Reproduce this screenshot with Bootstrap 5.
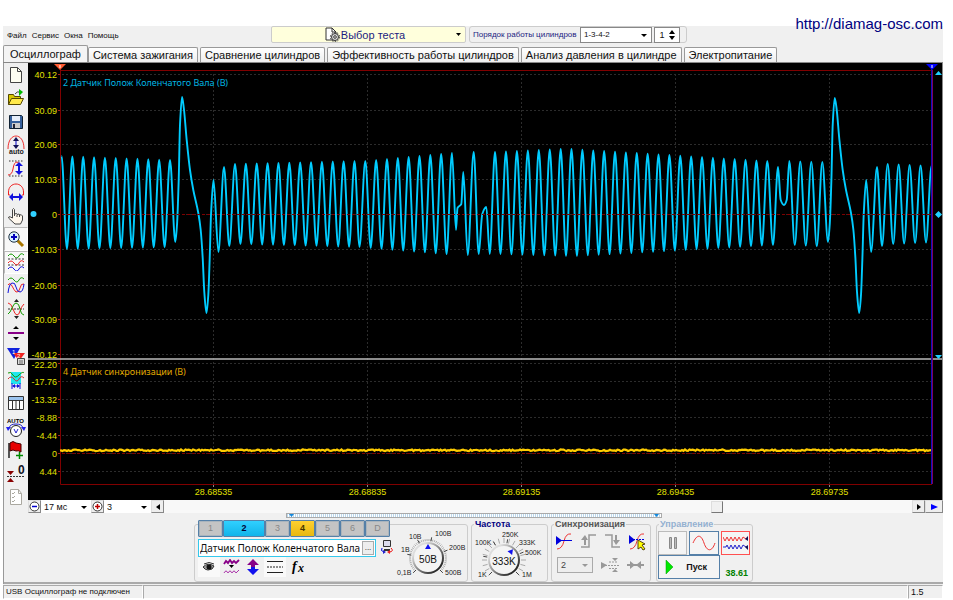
<!DOCTYPE html>
<html lang="ru">
<head>
<meta charset="utf-8">
<meta name="viewport" content="width=device-width, initial-scale=1">
<title>USB Осциллограф</title>
<link href="https://cdn.jsdelivr.net/npm/bootstrap@5.3.0/dist/css/bootstrap.min.css" rel="stylesheet">
<style>
:root{--face:#f0f0f0;--cy:#00ccff;--navy:#000080}
body{background:#fff;font:8px/12px "Liberation Sans",Arial,sans-serif;color:#111;padding:26px 10px 0 3px}
button,input,select{font:inherit;color:inherit;margin:0;padding:0;border-radius:0}
svg{display:block}
svg text{font-family:"Liberation Sans",Arial,sans-serif}
svg .trace-name{font-family:"Noto Sans","Liberation Sans",sans-serif}
.site-url{position:absolute;top:14px;right:10px;font-size:15px;line-height:20px;color:var(--navy)}
.app-win{background:var(--face)}
.top-bar{height:20px}
.main-menu{width:268px;padding:0 4px;gap:5px}
.main-menu a{color:#111}
.test-btn{width:195px;height:17px;background:#ffffdc;border:1px solid #ccc;border-radius:2px;color:#1c1c80;font-size:11px;line-height:14px}
.order-box{border:1px solid #ccc;border-radius:3px;height:17px;margin-left:3px;padding:0 6px 0 3px;gap:2px;font-size:8px;color:#1c1c80;width:218px}
.flat-select{appearance:none;border:0;background:#fff;outline:0;color:#111;padding:0 3px}
.pick{position:relative;background:#fff}
.pick::after{content:"";position:absolute;right:4px;top:50%;margin-top:-1px;border:3px solid transparent;border-top-color:#000;border-bottom:0;pointer-events:none}
.order-pick{border:1px solid #888;width:72px;height:16px;font-size:8px}
.order-pick select,.tb-pick select,.sync-pick select{width:100%;height:100%;display:block}
.spin{border:1px solid #888;width:26px;height:16px;background:#fff}
.spin input{width:14px;border:0;text-align:center;font-size:9px;color:#111;appearance:textfield;background:none}
.spin button{border:0;background:none;width:8px;height:6px;display:block}
.scope-tabs{height:17px;gap:2px;border-bottom:1px solid #888}
.scope-tabs button{border:1px solid #999;border-bottom:0;border-radius:2px 2px 0 0;background:linear-gradient(#fff,#eee);font-size:11px;line-height:14px;height:15px;white-space:nowrap;flex:none;padding:0 4px}
.scope-tabs .sel{background:#f4f4f4;height:17px;margin-right:-2px;padding:0 6px}
.tools{width:25px;border-left:1px solid #999;padding-bottom:4px}
.tools button{flex:1 1 0;min-height:0;border:1px solid transparent;background:none;display:flex;align-items:center;justify-content:center}
.tools .down{background:#f8f8f8;border-color:#bbb #fff #fff #bbb}
.scope-view{background:#000;width:100%;height:auto}
.time-bar{height:13px;background:#fff;font-size:9px}
.tb-pick{height:13px}
.tb-time{width:50px}
.tb-mult{width:47px}
.sq{width:13px;height:13px;background:#eee;border:1px solid #999;border-color:#ddd #888 #888 #ddd;display:flex;align-items:center;justify-content:center;flex:none}
.sq-end{width:18px}
.pos-range{appearance:none;background:#f8f8f8;height:13px;min-width:0}
.pos-range::-webkit-slider-thumb{appearance:none;width:12px;height:12px;background:var(--face);border:1px solid;border-color:#ddd #777 #777 #ddd}
.splitter{width:376px;height:5px;border:1px solid #aaa;background:repeating-linear-gradient(90deg,#bcd8ec 0 1px,#fff 1px 2px);padding:0 2px}
.ctl-wrap{border-left:1px solid #999}
.ctl-row{gap:3px;height:66px;padding-top:3px;border-bottom:2px solid #aaa}
.grp{border:1px solid #ccc;border-radius:3px;position:relative;height:58px;margin-top:3px;min-width:0}
.grp h2{position:absolute;top:-6px;left:2px;margin:0;padding:0 1px;background:var(--face);font-size:9px;line-height:10px;font-weight:700}
.ttl-freq{color:#000080}.ttl-sync{color:#555}.ttl-run{color:#94b0d0}
.ch-grp{width:274px}
.ch-left{width:198px;padding-left:3px;margin-top:-5px}
.ch-btns button{border:1px solid #5580a8;background:#c4c4c4;color:#888;font-size:9px;line-height:13px;height:17px;width:25px;border-radius:1px;box-shadow:inset 0 0 0 1px #aab4bc}
.ch-btns .ch-cy{background:linear-gradient(#30d0ff,#10b4ea);width:42px;color:#003;font-weight:700;box-shadow:none}
.ch-btns .ch-ye{background:linear-gradient(#ffd030,#e8b810);color:#430;font-weight:700;box-shadow:none}
.name-box{width:178px;height:18px;border:1px solid #35c8ec;background:#fff;margin:2px 0 0 0;padding:1px}
.name-box input{border:0;flex:1;min-width:0;font-family:"Noto Sans","Liberation Sans",sans-serif;font-size:10px;outline:0;color:#111}
.name-box button{width:12px;border:1px solid #aaa;background:#eee;line-height:6px}
.ch-icons button{width:22px;height:20px;border:0;background:none;display:flex;align-items:center;justify-content:center}
.ch-icons .down{background:#f9f9f9}
.serif-it{font-style:italic;font-weight:700}
svg .serif-it{font-family:"Liberation Serif",serif}
.fr-grp{width:77px}
.sy-grp{width:100px}
.cn-grp{width:97px;margin-left:2px}
.sync-icons{padding:8px 3px 0 4px;height:28px}
.sync-icons button{border:0;background:none;display:flex;align-items:flex-start}
.sync-pick{width:36px;height:16px;border:1px solid #aaa;background:#eee;font-size:9px}
.sync-pick select{background:#eee;color:#444}
.sync-pick::after{border-top-color:#999}
.sync-low{padding:4px 3px 0 5px;gap:8px}
.run-top{gap:2px;padding:6px 2px 0 1px}
.run-top button{width:30px;height:24px;border:1px solid #5580a8;background:#f4f4f4;display:flex;align-items:center;justify-content:center}
.run-top .off{border-color:#bbb}
.run-top .rec{border-color:#ff5050}
.start-btn{width:62px;height:24px;border:1px solid #5580a8;background:#f4f4f4;margin-left:1px;font-size:9px;font-weight:700;padding:0 12px 0 6px}
.rate{color:#008000;font-weight:700;font-size:9px}
.status{height:14px;margin-top:1px;background:var(--face)}
.status div{border:1px solid;border-color:#aaa #fff #fff #aaa;line-height:12px;padding-left:2px}
.st-a{width:140px}.st-c{width:35px;font-size:9px}
</style>
<script src="https://cdn.jsdelivr.net/npm/bootstrap@5.3.0/dist/js/bootstrap.bundle.min.js"></script>
</head>
<body>
<a class="site-url text-decoration-none" href="http://diamag-osc.com">http://diamag-osc.com</a>
<div class="app-win">
<header class="top-bar d-flex align-items-start">
  <nav class="main-menu d-flex align-self-center">
    <a class="text-decoration-none" href="#">Файл</a><a class="text-decoration-none" href="#">Сервис</a><a class="text-decoration-none" href="#">Окна</a><a class="text-decoration-none" href="#">Помощь</a>
  </nav>
  <button class="test-btn d-flex align-items-center justify-content-center position-relative" type="button">
    <svg width="17" height="15" viewBox="0 0 17 15"><path d="M2 1h6l4 4v8H2z" fill="#fff" stroke="#333"/><path d="M8 1v4h4" fill="none" stroke="#333"/><circle cx="11" cy="10" r="3.5" fill="#ddd" stroke="#333"/><circle cx="11" cy="10" r="4.6" fill="none" stroke="#333" stroke-dasharray="1.5 1.4"/><circle cx="11" cy="10" r="1.3" fill="#fff" stroke="#333"/></svg>
    <span class="pe-2">Выбор теста</span>
    <svg class="position-absolute end-0 me-1" width="5" height="3"><path d="M0 0h5L2.500 3z"/></svg>
  </button>
  <div class="order-box d-flex align-items-center">
    <label class="flex-grow-1 text-nowrap" for="ord">Порядок работы цилиндров</label>
    <div class="pick order-pick flex-shrink-0"><select id="ord" class="flat-select"><option>1-3-4-2</option></select></div>
    <div class="spin d-flex align-items-center flex-shrink-0"><input aria-label="Номер цилиндра" type="text" value="1">
      <div><button type="button" aria-label="Больше"><svg width="6" height="4"><path d="M0 4h6L3 0z"/></svg></button><button type="button" aria-label="Меньше"><svg width="6" height="5"><path d="M0 1h6L3 5z"/></svg></button></div></div>
  </div>
</header>
<div class="scope-tabs d-flex align-items-end" role="tablist">
  <button role="tab" class="sel" type="button">Осциллограф</button>
  <button role="tab" type="button">Система зажигания</button>
  <button role="tab" type="button">Сравнение цилиндров</button>
  <button role="tab" type="button">Эффективность работы цилиндров</button>
  <button role="tab" type="button">Анализ давления в цилиндре</button>
  <button role="tab" type="button">Электропитание</button>
</div>
<main class="d-flex">
<div class="tools d-flex flex-column flex-shrink-0">
  <button type="button" aria-label="Новый"><svg width="18" height="18" viewBox="0 0 18 18"><path d="M3.500 1.500h7l4 4v11h-11z" fill="#fffff2" stroke="#444"/><path d="M10.500 1.500v4h4" fill="none" stroke="#444"/></svg></button>
  <button type="button" aria-label="Открыть"><svg width="18" height="18" viewBox="0 0 18 18"><path d="M1.500 15.500v-10h5l1 2h6v3" fill="#d8c800" stroke="#554800"/><path d="M1.500 15.500l3-6h12l-3 6z" fill="#ffe94a" stroke="#554800"/><path d="M8 5q2-3 5-2" fill="none" stroke="#444"/><path d="M12 0l4 3-4 4z" fill="#0b0"/></svg></button>
  <button type="button" aria-label="Сохранить"><svg width="18" height="18" viewBox="0 0 18 18"><path d="M2.500 2.500h12l1 1v12h-13z" fill="#36609c" stroke="#123"/><path d="M5 3h8v5H5z" fill="#e6eefa"/><path d="M5 10h8v5H5z" fill="#ccc"/><path d="M6 11h2v4H6z" fill="#223"/></svg></button>
  <button type="button" aria-label="Авто"><svg width="18" height="20" viewBox="0 0 18 20"><path d="M1 14C1 5 5 1 9 1s8 4 8 13" fill="none" stroke="#e33"/><path d="M9 5v6" stroke="#00c"/><path d="M6 6l3-4 3 4zM6 10h6l-3 4z" fill="#115"/><text x="2" y="19" font-size="7" font-weight="bold" fill="#222">auto</text></svg></button>
  <button type="button" aria-label="Амплитуда"><svg width="18" height="18" viewBox="0 0 18 18"><path d="M2 1h15M2 16h15" stroke="#333" stroke-dasharray="1.500 1.500"/><path d="M1 15q4 0 5-6 1-7 4-7 2 0 2 3" fill="none" stroke="#e22"/><path d="M12 5v7" stroke="#11d" stroke-width="2"/><path d="M8 6l4-4 4 4zM8 11h8l-4 4z" fill="#11d"/></svg></button>
  <button type="button" aria-label="Период"><svg width="18" height="18" viewBox="0 0 18 18"><path d="M3 12H1.500V9C1.500 4 5 1 9 1s7.500 3 7.500 8v3H15" fill="none" stroke="#e22"/><path d="M5 14h8" stroke="#11d" stroke-width="2"/><path d="M6 10v8l-4-4zM12 10v8l4-4z" fill="#11d"/></svg></button>
  <button type="button" aria-label="Рука"><svg width="18" height="18" viewBox="0 0 18 18"><path d="M5.500 11V2.500q1-2 2 0V7l2-.5.500 1 2-.5.500 1q2-1 3 1v4l-2 4H8L1.500 11q0-2 2-1z" fill="#fff8ee" stroke="#444"/><path d="M7.500 7v2M10 8v2M12.500 8v2" stroke="#444"/></svg></button>
  <button type="button" class="down" aria-label="Масштаб"><svg width="18" height="18" viewBox="0 0 18 18"><path d="M10 10l6 6" stroke="#a70" stroke-width="3"/><circle cx="7" cy="7" r="5.200" fill="#d8f2ff" stroke="#234"/><path d="M4 7h6M7 4v6" stroke="#00b" stroke-width="2"/></svg></button>
  <button type="button" class="down" aria-label="Раздельно"><svg width="18" height="18" viewBox="0 0 18 18" fill="none"><path d="M1 3q3-4 6 0t5 0 5-1" stroke="#190"/><path d="M1 6h16M1 12h16" stroke="#333" stroke-dasharray="2 1.500"/><path d="M1 10q3-4 6 0t5 0 5-1" stroke="#e22"/><path d="M1 16q3-4 6 0t5 0 5-1" stroke="#11d"/></svg></button>
  <button type="button" aria-label="Наложение"><svg width="18" height="18" viewBox="0 0 18 18" fill="none"><path d="M1 3q3-4 6 0t5 0 5-1" stroke="#190"/><path d="M1 8q2-3 4 1t4 6q3 1 4-4t4-4" stroke="#e22"/><path d="M1 16q1-9 4-10t4 4 4 5 4-8" stroke="#11d"/></svg></button>
  <button type="button" aria-label="Совместить"><svg width="18" height="20" viewBox="0 0 18 20" fill="none"><path d="M1 10h16" stroke="#333" stroke-dasharray="2 1"/><path d="M1 4q3 0 5 6t4 6q2 0 3-4t4-7" stroke="#e22"/><path d="M1 15q2-1 4-6t4-5q3 0 4 6t4 6" stroke="#190"/><path d="M7 3h5L9.500 0zM7 17h5l-2.500 3z" fill="#222"/></svg></button>
  <button type="button" aria-label="Разделить"><svg width="18" height="18" viewBox="0 0 18 18"><path d="M6 5h6L9 2zM6 13h6l-3 3z"/><path d="M1 9h16" stroke="#808" stroke-width="2"/></svg></button>
  <button type="button" aria-label="Маркеры"><svg width="18" height="18" viewBox="0 0 18 18"><path d="M0 1h13L7 12z" fill="#12d"/><path d="M6 6h12l-6 8z" fill="#e22"/><text x="5" y="7" font-size="6" fill="#fff">1</text><text x="10" y="11" font-size="6" fill="#fff">2</text><path d="M10.500 11.500h7v6h-7z" fill="#ddd" stroke="#444"/><path d="M12 14h4M12 16h4" stroke="#666"/></svg></button>
  <button type="button" aria-label="Интервал"><svg width="18" height="18" viewBox="0 0 18 18" fill="none"><path d="M4 1h10v12H4z" fill="#1ee6ee"/><path d="M1 2q3-2 5 2t6 0 5-2" stroke="#190"/><path d="M1 8q3-4 6 0t5 0 5-1" stroke="#c33"/><path d="M5 12v6M13 12v6M6 15h6" stroke="#11d"/><path d="M5 15l3-2v4zM13 15l-3-2v4z" fill="#11d"/></svg></button>
  <button type="button" aria-label="Таблица"><svg width="18" height="18" viewBox="0 0 18 18"><path d="M1.500 2.500h15v13h-15z" fill="#fff" stroke="#333"/><path d="M2 3h14v3H2z" fill="#9cc4ee"/><path d="M2 6.500h14M5.500 6v9M9 6v9M12.500 6v9" stroke="#333"/></svg></button>
  <button type="button" aria-label="Авто вольт"><svg width="20" height="22" viewBox="0 0 20 22"><text x="1" y="7" font-size="6" font-weight="bold">AUTO</text><circle cx="10" cy="15" r="5.500" fill="#fff" stroke="#222"/><path d="M8 13l2 4 2-4" fill="none" stroke="#22c"/><path d="M3 12q1-4 7-4t7 4" fill="none" stroke="#22c"/><path d="M0 11h5l-3 4zM15 11h5l-2 4z" fill="#22e"/></svg></button>
  <button type="button" aria-label="Флаг"><svg width="18" height="18" viewBox="0 0 18 18"><path d="M2 2v15" stroke="#222" stroke-width="1.500"/><path d="M3 2q3-3 6 0l5 1v8q-3-2-5-1-3-2-6 0z" fill="#e60000" stroke="#400"/><path d="M9 14.500h7M12.500 11v7" stroke="#080" stroke-width="1.500"/></svg></button>
  <button type="button" aria-label="Ноль"><svg width="20" height="20" viewBox="0 0 20 20"><text x="12" y="10" font-size="12" font-weight="bold" fill="#112">0</text><path d="M1 7h7l-3.500 4zM1 18h7l-3.500-4z" fill="#800"/><path d="M1 12.500h17" stroke="#333" stroke-dasharray="2 1"/></svg></button>
  <button type="button" aria-label="Отчёт"><svg width="18" height="18" viewBox="0 0 18 18"><path d="M3.500 1.500h8l3 4v11h-11z" fill="#fff" stroke="#aaa8a0"/><path d="M11.500 1.500v4h3M5 5l1 1 2-2M5 9l1 1 2-2M5 13l1 1 2-2" fill="none" stroke="#aaa8a0"/></svg></button>
</div>
<div class="flex-grow-1">
<svg class="scope-view" id="scope" viewBox="28 63 915 437"></svg>
<div class="time-bar d-flex">
  <button class="sq" type="button" aria-label="Сжать"><svg width="11" height="11" viewBox="0 0 11 11"><circle cx="5.500" cy="5.500" r="4.500" fill="#fff" stroke="#333"/><path d="M3 5.500h5" stroke="#00c" stroke-width="1.500"/></svg></button>
  <div class="pick tb-pick tb-time"><select class="flat-select" aria-label="Развёртка"><option>17 мс</option></select></div>
  <button class="sq" type="button" aria-label="Растянуть"><svg width="11" height="11" viewBox="0 0 11 11"><circle cx="5.500" cy="5.500" r="4.500" fill="#fff" stroke="#333"/><path d="M3 5.500h5M5.500 3v5" stroke="#b00" stroke-width="1.500"/></svg></button>
  <div class="pick tb-pick tb-mult"><select class="flat-select" aria-label="Множитель"><option>3</option></select></div>
  <button class="sq" type="button" aria-label="Влево"><svg width="4" height="6"><path d="M4 0v6L0 3z"/></svg></button>
  <input class="pos-range flex-grow-1" type="range" min="0" max="1000" value="743" aria-label="Позиция">
  <button class="sq" type="button" aria-label="Вправо"><svg width="4" height="6"><path d="M0 0v6l4-3z"/></svg></button>
  <button class="sq sq-end" type="button" aria-label="В конец"><svg width="7" height="6"><path d="M0 0v6l7-3z" fill="#00f"/></svg></button>
</div>
</div>
</main>
<div class="ctl-wrap">
<div class="d-flex justify-content-center"><button class="splitter d-flex justify-content-between" type="button" aria-label="Свернуть панель"><svg width="5" height="3"><path d="M0 0h5L2.500 3z" fill="#18d"/></svg><svg width="5" height="3"><path d="M0 0h5L2.500 3z" fill="#18d"/></svg></button></div>
<section class="ctl-row d-flex justify-content-center">
  <div class="grp ch-grp d-flex">
    <div class="ch-left">
      <div class="ch-btns d-flex"><button type="button">1</button><button type="button" class="ch-cy">2</button><button type="button">3</button><button type="button" class="ch-ye">4</button><button type="button">5</button><button type="button">6</button><button type="button">D</button></div>
      <div class="d-flex align-items-center"><div class="name-box d-flex"><input type="text" aria-label="Название канала" value="Датчик Полож Коленчатого Вала"><button type="button" aria-label="Выбрать">...</button></div>
      <svg class="ms-1" width="13" height="14" viewBox="0 0 13 14"><path d="M3.500.5h7v6h-7z" fill="#dde" stroke="#333"/><path d="M4 9h6v2H4z" fill="#333"/><path d="M2 8q-2 3 2 4" fill="none" stroke="#00d"/><path d="M11 8q3 3-1 4" fill="none" stroke="#e00"/><path d="M3 10l3 2-3 2z" fill="#22c"/><path d="M10 10l-3 2 3 2z" fill="#e22"/></svg></div>
      <div class="ch-icons d-flex">
        <button type="button" class="down" aria-label="Показать"><svg width="14" height="10" viewBox="0 0 14 10"><path d="M1 5q5-5 11-1-1 4-6 4Q3 8 1 5z" fill="#999" stroke="#333"/><circle cx="7" cy="5" r="2.500" fill="#111"/><path d="M2 2q5-3 10 0" fill="none" stroke="#333"/></svg></button>
        <button type="button" aria-label="Фильтр"><svg width="17" height="16" viewBox="0 0 17 16"><path d="M1 5l2-3 2 2 2-3 2 3 2-2 2 2 3-3" fill="none" stroke="#808" stroke-width="1.800"/><path d="M1 14q2-4 4 0 2-4 4 0 2-4 4 0l3-3" fill="none" stroke="#a3a"/><path d="M6 6h5L8.500 9z"/></svg></button>
        <button type="button" aria-label="Инверсия"><svg width="14" height="18" viewBox="0 0 14 18"><path d="M7 1l6 6h-4v2H5V7H1z" fill="#808"/><path d="M7 17l6-6h-4V9H5v2H1z" fill="#11e"/></svg></button>
        <button type="button" class="down" aria-label="Уровни"><svg width="16" height="14"><path d="M0 1.500h16M0 12.500h16" stroke="#222"/><path d="M0 7h16" stroke="#222" stroke-dasharray="2 1"/></svg></button>
        <button type="button" aria-label="Функция"><svg width="16" height="16" viewBox="0 0 16 16"><text class="serif-it" x="3" y="12" font-size="14">f</text><text class="serif-it" x="9" y="13" font-size="12">x</text></svg></button>
      </div>
    </div>
    <svg id="volt" width="74" height="56" viewBox="391 525 74 56"></svg>
  </div>
  <div class="grp fr-grp"><h2 class="ttl-freq">Частота</h2><svg id="freq" width="74" height="56" viewBox="471 525 74 56"></svg></div>
  <div class="grp sy-grp"><h2 class="ttl-sync">Синхронизация</h2>
    <div class="sync-icons d-flex justify-content-between">
      <button type="button" aria-label="Нарастание"><svg width="16" height="17" viewBox="0 0 16 17"><path d="M1 16q5 0 7-8t7-7" fill="none" stroke="#e33"/><path d="M1 7.500h15" stroke="#00d"/><path d="M0 3l6 4.500L0 12z" fill="#00d"/></svg></button>
      <button type="button" aria-label="Фронт"><svg width="17" height="16" viewBox="0 0 17 16"><path d="M1 14h8V2h7" fill="none" stroke="#999" stroke-width="1.500"/><path d="M5 12V6" stroke="#999" stroke-width="2"/><path d="M1 7l4-5 3 5z" fill="#999"/></svg></button>
      <button type="button" aria-label="Спад"><svg width="17" height="16" viewBox="0 0 17 16"><path d="M1 2h7v12h8" fill="none" stroke="#999" stroke-width="1.500"/><path d="M12 2v6" stroke="#999" stroke-width="2"/><path d="M9 7h7l-4 5z" fill="#999"/></svg></button>
      <button type="button" aria-label="Уровень"><svg width="18" height="18" viewBox="0 0 18 18"><path d="M1 16q5 0 7-8t7-7" fill="none" stroke="#e33"/><path d="M1 6.500h15" stroke="#00d" stroke-dasharray="2 1"/><path d="M0 2l6 5-6 4z" fill="#00d"/><path d="M9 7l7 4-3 1 3 4-2 1-2-3-3 2z" fill="#ff0" stroke="#541"/></svg></button>
    </div>
    <div class="sync-low d-flex align-items-center"><div class="pick sync-pick"><select class="flat-select" aria-label="Канал синхронизации"><option>2</option></select></div>
      <svg width="18" height="16" viewBox="0 0 18 16" fill="#999"><path d="M0 5l6 3-6 4zM11 1h6l-3 3zM11 15h6l-3-3z"/><path d="M4 8.500h14M8 5h9M8 11.500h9" stroke="#999" stroke-dasharray="2 1"/></svg>
      <svg width="17" height="10" viewBox="0 0 17 10"><path d="M0 5h17" stroke="#999" stroke-width="2"/><path d="M3 1l5 4-5 4zM14 1L9 5l5 4z" fill="#999"/></svg></div>
  </div>
  <div class="grp cn-grp"><h2 class="ttl-run">Управление</h2>
    <div class="run-top d-flex">
      <button type="button" class="off" aria-label="Пауза"><svg width="10" height="12"><path d="M1.500.5h2v11h-2zM6.500.5h2v11h-2z" fill="#bbb" stroke="#888"/></svg></button>
      <button type="button" aria-label="Однократно"><svg width="24" height="16" viewBox="0 0 24 16"><path d="M1 8C5-1 9-1 12 8s8 9 11 0" fill="none" stroke="#e33"/></svg></button>
      <button type="button" class="rec" aria-label="Запись"><svg width="25" height="16" viewBox="0 0 25 16" fill="none"><path d="M0 2l2 4 2-4 2 4 2-4 2 4 2-4 2 4 2-4 2 4 2-4 3 2" stroke="#e33"/><path d="M0 12h3l1-2 2 4 2-4 2 4 2-4 2 4 2-4 2 4 2-4 3 2" stroke="#22c"/><path d="M25 1v5l-3-2zM25 10v5l-3-3z" fill="#115"/></svg></button>
    </div>
    <div class="d-flex align-items-end justify-content-between pe-1"><button type="button" class="start-btn d-flex align-items-center justify-content-between"><svg width="9" height="14"><path d="M1 0v14l7-7z" fill="#00e800" stroke="#090" stroke-width=".5"/></svg>Пуск</button><span class="rate">38.61</span></div>
  </div>
</section>
</div>
<footer class="status d-flex"><div class="st-a">USB Осциллограф не подключен</div><div class="flex-grow-1"></div><div class="st-c">1.5</div></footer>
</div>
<script>
const pts = [];
// n+1 oscillation peaks from x0 to x1, with a trough after every peak but the last
function run(x0, x1, n, p0, p1, t0, t1) {
  for (let i = 0; i <= n; i++) {
    const k = n ? i / n : 0, x = x0 + (x1 - x0) * k;
    pts.push([x, p0 + (p1 - p0) * k]);
    if (i < n) pts.push([x + (x1 - x0) / n / 2, t0 + (t1 - t0) * k]);
  }
}
function tooth(x, top) {
  [[-6.7, 242], [-5, 225], [-3.3, 180], [-2, 125], [0, top], [1.8, 108], [4.7, 140], [8, 170], [11.3, 190], [16.3, 213], [18.7, 230], [20.7, 258], [22.3, 292], [24.5, 313], [26.3, 295], [27.7, 258], [29, 215], [31.5, 180], [36.4, 252]]
    .forEach(([dx, y]) => pts.push([x + dx, y]));
}
run(61.500, 170, 10, 156, 160, 249, 247);
tooth(182, 97);
pts.push([224, 167], [229.300, 246]);
run(235, 354.500, 11, 164, 161, 244, 247);
pts.push([359.500, 247]);
run(365.300, 452, 8, 161, 153, 248, 255);
pts.push([456, 230], [457.500, 208], [461.300, 204], [463.300, 172], [467.700, 255], [473.700, 152], [478.700, 254], [482.300, 214], [486.300, 207], [489.700, 254]);
run(495, 560.700, 6, 152, 149, 254, 256);
pts.push([566, 256]);
run(571.500, 767.300, 18, 149, 161, 256, 245);
pts.push([773, 245], [778, 167], [780.700, 200], [784, 205], [786.700, 200]);
run(789.300, 822.300, 3, 161, 162, 245, 247);
tooth(834.700, 98);
pts.push([877, 167], [882, 246]);
run(887.700, 931.500, 4, 164, 166, 244, 242);

// monotone cubic interpolation through the sample points
function smooth(p) {
  const s = [], m = [];
  for (let i = 0; i < p.length - 1; i++) s.push((p[i + 1][1] - p[i][1]) / (p[i + 1][0] - p[i][0]));
  for (let i = 0; i < p.length; i++) {
    const a = s[i - 1], b = s[i];
    m.push(a === undefined || b === undefined || a * b <= 0 ? 0 : 2 * a * b / (a + b));
  }
  let d = `M${p[0]}`;
  for (let i = 0; i < s.length; i++) {
    const h = (p[i + 1][0] - p[i][0]) / 3;
    d += `C${(p[i][0] + h).toFixed(2)} ${(p[i][1] + m[i] * h).toFixed(2)} ${(p[i + 1][0] - h).toFixed(2)} ${(p[i + 1][1] - m[i + 1] * h).toFixed(2)} ${p[i + 1][0].toFixed(2)} ${p[i + 1][1]}`;
  }
  return d;
}
let g = '';
const upper = [[74.500, '40.12'], [110.500, '30.09'], [144.500, '20.06'], [179.500, '10.03'], [214.500, '0'], [249.500, '-10.03'], [285.500, '-20.06'], [319.500, '-30.09'], [354.500, '-40.12']];
const lower = [[363.500, '-22.20'], [381.500, '-17.76'], [399.500, '-13.32'], [417.500, '-8.88'], [435.500, '-4.44'], [453.500, '0'], [471.500, '4.44']];
[...upper, ...lower].forEach(([y, t]) => {
  g += `<path d="M62 ${y}H931" stroke="#2c2c2c" stroke-dasharray="2 2"/><path d="M58 ${y}h3" stroke="#a22"/><text x="57" y="${y + (y === 363.5 ? 4 : 3)}" text-anchor="end" font-size="9" fill="#e0e000">${t}</text>`;
});
[[213.500, '28.68535'], [367.500, '28.68835'], [521.500, '28.69135'], [675.500, '28.69435'], [829.500, '28.69735']].forEach(([x, t]) => {
  g += `<path d="M${x} 74V484" stroke="#2c2c2c" stroke-dasharray="2 2"/><path d="M${x} 484v3" stroke="#888"/><text x="${x}" y="495" text-anchor="middle" font-size="9" fill="#e0e000">${t}</text>`;
});
g += '<path d="M60 70.500H932M60.500 68V484.500H932" fill="none" stroke="#800000"/>';
g += `<path d="${smooth(pts)}" fill="none" stroke="#00ccff" stroke-width="1.900"/>`;
g += '<path d="M62 214.500H931M62 453.500H931" stroke="#800000" stroke-dasharray="3 2"/>';
let n = 'M60 450.500', seed = 7;
for (let x = 61; x < 932; x += 1.500) { seed = (seed * 73 + 41) % 1009; n += `L${x} ${(449.500 + seed / 1009 * 1.600).toFixed(1)}`; }
g += `<path d="${n}" fill="none" stroke="#ffcc00" stroke-width="2.200"/>`;
g += '<path d="M28 359H943" stroke="#bbb" stroke-width="1.500"/><path d="M931.500 65V484" stroke="#1010c0"/><path d="M932.500 70V484" stroke="#800060"/>';
g += '<path d="M54 64h12l-6 6z" fill="#ff5a30"/><path d="M60 65v3" stroke="#fff"/><path d="M926 64h12l-6 6z" fill="#00f"/><path d="M932 65v3" stroke="#fff"/>';
g += '<circle cx="33.500" cy="214" r="3" fill="#30d0ff"/><path d="M935 75h7l-3.500-4zM935 355h7l-3.500 4zM935 214.500l3.500-3.500 3.500 3.500-3.500 3.500z" fill="#20d0ff"/><path d="M942.500 63V500" stroke="#888"/>';
g += '<text class="trace-name" x="63" y="86" font-size="9" fill="#00b4e0">2 Датчик Полож Коленчатого Вала (В)</text><text class="trace-name" x="63" y="375" font-size="9" fill="#e0a800">4 Датчик синхронизации (В)</text>';
document.getElementById('scope').innerHTML = g;

function dial(id, cx, cy, rot, val, fs, labels) {
  let s = `<defs><linearGradient id="${id}g" x1="0" y1="0" x2="1" y2="1"><stop offset=".2" stop-color="#ddd"/><stop offset="1" stop-color="#000"/></linearGradient></defs>`;
  for (let a = -135; a <= 135; a += id === 'volt' ? 6 : 15) {
    const r = (a - 90) * Math.PI / 180, c = Math.cos(r), q = Math.sin(r), o = id === 'volt' ? 19 : 22;
    s += `<path d="M${cx + c * 17} ${cy + q * 17}L${cx + c * o} ${cy + q * o}" stroke="#aaa"/>`;
  }
  [-135, -80, -30, 10, 68, 135].forEach(a => {
    const r = (a - 90) * Math.PI / 180;
    s += `<path d="M${cx + Math.cos(r) * 17} ${cy + Math.sin(r) * 17}L${cx + Math.cos(r) * 21} ${cy + Math.sin(r) * 21}" stroke="#444"/>`;
  });
  s += `<circle cx="${cx}" cy="${cy}" r="15" fill="#f4f4f4" stroke="url(#${id}g)" stroke-width="2"/><path d="M${cx - 3} ${cy - 9}h6l-3-5z" fill="#11e" transform="rotate(${rot} ${cx} ${cy})"/><text x="${cx}" y="${cy + 5}" text-anchor="middle" font-size="${fs}" fill="#111">${val}</text>`;
  labels.forEach(([x, y, t]) => s += `<text x="${x}" y="${y}" font-size="7" fill="#222">${t}</text>`);
  document.getElementById(id).innerHTML = s;
}
dial('volt', 426, 558, 0, '50В', 10, [[395, 575, '0,1В'], [399, 552, '1В'], [407, 539, '10В'], [433, 536, '100В'], [447, 550, '200В'], [443, 575, '500В']]);
dial('freq', 503, 560, 40, '333K', 10, [[477, 577, '1K'], [474, 545, '100K'], [501, 537, '250K'], [518, 545, '333K'], [524, 555, '500K'], [521, 577, '1M']]);
</script>
</body>
</html>
